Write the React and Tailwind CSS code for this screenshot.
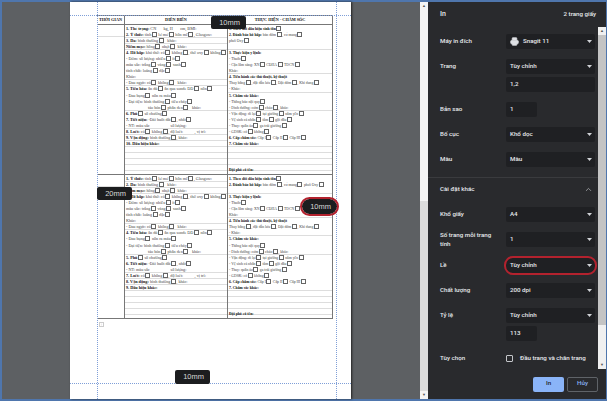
import { ChevronUp, Printer } from 'lucide-react'

const LEFT_ROWS = [
  ['**2. Ý thức:** tỉnh [] lơ mơ [] hôn mê [] , Glasgow:', 1],
  ['**3. Da:** bình thường []   khác:', 1],
  ['**Niêm mạc:** hồng [] nhợt []  khác:', 1],
  ['**4. Hô hấp:** khó thở: có [] không [] , thở oxy [] không []', 0],
  ['- Đờm: số lượng: nhiều [] ít []', 0],
  ['màu sắc: trắng [] vàng [] xanh []', 0],
  ['tính chất: loãng [] đặc []', 0],
  ['Khác:', 1],
  ['- Đau ngực: có [] không []   khác:', 1],
  ['**5. Tiêu hóa:** ăn đủ [] ăn qua sonde DD [] nôn []', 0],
  ['- Đau bụng [] nôn ra máu []', 0],
  ['- Đại tiện: bình thường [] tiêu chảy []', 0],
  ['__táo bón [] phân đen []   khác:', 1],
  ['**6. Phù** [] số chướng []', 0],
  ['**7. Tiết niệu:** -Đái buốt dắt [] , nhắt []', 0],
  ['- NT: màu sắc                    số lượng:', 1],
  ['**8. Loét:** có [] không [] , độ loét:            , vị trí:', 1],
  ['**9. Vận động:** bình thường [] , khác:', 1],
  ['**10. Dấu hiệu khác:**', 1],
]

const CARE_ROWS = [
  ['**3. Thực hiện y lệnh:**', 0],
  ['- Thuốc []', 0],
  ['- Cận lâm sàng: XN [] CĐHA [] TDCN []', 0],
  ['Khác:', 1],
  ['**4. Tiến hành các thủ thuật, kỹ thuật**', 0],
  ['Thay băng [] , đặt dẫn lưu [] , Đặt đờm [] , Khí dung []', 0],
  ['- Khác:', 1],
  ['**5. Chăm sóc khác:**', 0],
  ['- Thông báo nội quy []', 0],
  ['- Dinh dưỡng: cơm [] cháo [] , khác:', 1],
  ['- Vận động: đi lại [] tại giường [] nằm yên []', 0],
  ['- Vệ sinh cá nhân [] tắm [] gội đầu []', 0],
  ['- Thay: quần áo [] ga trải giường []', 0],
  ['- GDSK: có [] không []', 0],
  ['**6. Cấp chăm sóc:** Cấp I [] Cấp II [] Cấp III []', 0],
  ['**7. Chăm sóc khác:**', 1],
  ['', 1],
  ['', 1],
  ['', 1],
  ['', 1],
]

const TOP_RIGHT = [
  ['**1. Theo dõi dấu hiệu sinh tồn** []', 0],
  ['**2. Đánh bảo hô hấp:** bàn đờm [] , cổ mang []', 0],
  ['phơi Oxy []', 0],
  ['', 1],
  ...CARE_ROWS,
]

const BOTTOM_RIGHT = [
  ['**1. Theo dõi dấu hiệu sinh tồn** []', 0],
  ['**2. Đánh bảo hô hấp:** bàn đờm [] , cổ mang [] phơi Oxy []', 0],
  ['', 1],
  ...CARE_ROWS,
]

const BLANK_LINES = [['', 1], ['', 1], ['', 1], ['', 1]]

const TOP_LEFT = [['**1. Thể trạng:** CN       kg, H       cm, BMI:', 0], ...LEFT_ROWS, ...BLANK_LINES]

// the second block has no "Thể trạng" row, so its numbers are one lower
const BOTTOM_LEFT = [
  ...LEFT_ROWS.map(([text, line]) => [
    text.replace(/^\*\*(\d+)\./, (m, n) => `**${Number(n) - 1}.`),
    line,
  ]),
  ...BLANK_LINES,
]

function Box() {
  return <span className="inline-block w-[5px] h-[5px] mx-[0.5px] border border-[#666] bg-white align-[-1px]" />
}

// "**x**" is bold, "[]" is a checkbox
function FormText({ text }) {
  const tight = text.replace(/ \[\]/g, '[]').replace(/ , /g, ', ')
  return tight.split(/(\*\*.*?\*\*|\[\])/).map((part, i) => {
    if (part === '[]') return <Box key={i} />
    if (part.startsWith('**')) return <b key={i} className="text-[#111]">{part.slice(2, -2)}</b>
    return <span key={i}>{part}</span>
  })
}

function FormRow({ text, line }) {
  const indent = text.startsWith('__')
  return (
    <div className={`h-[6.05px] leading-[6px] whitespace-pre ${line ? 'border-b border-[#ddd]' : ''} ${indent ? 'pl-[23px]' : 'pl-[1px]'}`}>
      <FormText text={indent ? text.slice(2) : text} />
    </div>
  )
}

function FormColumn({ rows }) {
  return rows.map(([text, line], i) => <FormRow key={i} text={text} line={line} />)
}

function FormBlock({ left, right, height }) {
  return (
    <div className={`grid grid-cols-[28px_103px_104px] ${height}`}>
      <div className="border-r border-[#777] pt-[6px]">
        <div className="h-[6px] border-b border-[#ddd]" />
      </div>
      <div className="border-r border-[#777] pt-[1px] min-w-0">
        <FormColumn rows={left} />
      </div>
      <div className="relative pt-[1px] min-w-0 text-[3.8px]">
        <FormColumn rows={right} />
        <div className="absolute bottom-[1px] left-[1px] font-bold leading-[6px] text-[#111]">Đội phó cô tên:</div>
      </div>
    </div>
  )
}

function Arrow() {
  return (
    <svg width="5" height="3" viewBox="0 0 5 3" className="shrink-0">
      <path d="M0 0H5L2.5 3Z" fill="#d0d2d6" />
    </svg>
  )
}

function Select({ children, icon, ring }) {
  return (
    <div className={`h-[15px] w-[89px] bg-[#1f2023] flex items-center pl-[4px] pr-[3px] text-[#e8eaed] ${ring ? 'outline-2 outline-[#b3222e] rounded-[7px]' : 'rounded-[2px]'}`}>
      {icon}
      <span className="flex-1">{children}</span>
      <Arrow />
    </div>
  )
}

function Input({ children, wide }) {
  return (
    <div className={`h-[15px] ${wide ? 'w-[89px]' : 'w-[31px]'} rounded-[2px] bg-[#1f2023] flex items-center pl-[4px] text-[#e8eaed]`}>
      {children}
    </div>
  )
}

function Setting({ label, children, className = 'mb-[10px]' }) {
  return (
    <div className={`flex ${className}`}>
      <div className="w-[66px] h-[15px] shrink-0 flex items-center leading-[9px] text-[#e8eaed]">
        <span>{label}</span>
      </div>
      <div className="flex flex-col gap-[3px]">{children}</div>
    </div>
  )
}

function Tag({ children, className }) {
  return (
    <div className={`absolute flex items-center justify-end pr-[6px] w-[35px] bg-[#1c1d1f] text-[#d8d8d8] text-[7.5px] ${className}`}>
      {children}
    </div>
  )
}

function ScrollEnd({ children }) {
  return <span className="h-[8px] text-[4px] leading-[8px] text-center text-[#555] shrink-0">{children}</span>
}

export default function App() {
  return (
    <div className="w-[607px] h-[401px] overflow-hidden bg-[#4f76ad] py-[2px] pl-[2px] pr-[1px] flex font-['Liberation_Sans',sans-serif]">
      {/* preview */}
      <div className="w-[418px] shrink-0 bg-[#5d6063] pl-[68px] flex">
        <div className="relative w-[281px] h-[397px] bg-white shadow-[1px_0_2px_#222] pt-[13px] pl-[27px] font-['Liberation_Serif',serif] text-[4.2px] text-[#444]">
          <div className="w-[236px] border border-[#777] border-l-0">
            <div className="grid grid-cols-[28px_103px_104px] h-[9px] border-b border-[#777] font-bold text-center text-[#111] leading-[8px]">
              <div className="border-r border-[#777]">THỜI GIAN</div>
              <div className="border-r border-[#777]">DIỄN BIẾN</div>
              <div>THỰC HIỆN - CHĂM SÓC</div>
            </div>
            <div className="border-b border-[#777]">
              <FormBlock left={TOP_LEFT} right={TOP_RIGHT} height="h-[149px]" />
            </div>
            <FormBlock left={BOTTOM_LEFT} right={BOTTOM_RIGHT} height="h-[143px]" />
          </div>
          <div className="mt-[3px] ml-[2px] w-[5px] h-[5px] border border-[#ccc] text-center leading-[3px] text-[#888]">+</div>

          {/* margin guides */}
          <div className="absolute top-[13px] left-0 right-0 border-t border-dotted border-[#7f9fd8]" />
          <div className="absolute top-[381px] left-0 right-0 border-t border-dotted border-[#7f9fd8]" />
          <div className="absolute top-0 bottom-0 left-[27px] border-l border-dotted border-[#7f9fd8]" />
          <div className="absolute top-0 bottom-0 left-[266px] border-l border-dotted border-[#7f9fd8]" />

          <div className="font-['Liberation_Sans',sans-serif]">
            <Tag className="top-[14px] left-[141px] h-[13px] rounded-[2px]">10mm</Tag>
            <Tag className="top-[185px] left-[27px] h-[13px] rounded-[2px]">20mm</Tag>
            <Tag className="top-[368px] left-[105px] h-[14px] rounded-[2px]">10mm</Tag>
            <Tag className="top-[197px] left-[232px] h-[15px] outline-2 outline-[#b3222e] rounded-[8px]">10mm</Tag>
          </div>
        </div>
      </div>

      {/* preview scrollbar */}
      <div className="w-[8px] shrink-0 bg-[#f4f4f4] flex flex-col">
        <ScrollEnd>▲</ScrollEnd>
        <div className="flex-1" />
        <div className="h-[190px] bg-[#dcdcdc]" />
        <ScrollEnd>▼</ScrollEnd>
      </div>

      {/* print settings */}
      <div className="flex-1 flex flex-col bg-[#292a2d] text-[6.2px] font-medium font-['Roboto',sans-serif]">
        <div className="h-[25px] shrink-0 flex items-center justify-between pl-[12px] pr-[10px] text-[#e8eaed]">
          <span className="text-[7px]">In</span>
          <span>2 trang giấy</span>
        </div>

        <div className="flex-1 flex min-h-0">
          <div className="flex-1 flex flex-col pl-[12px] pt-[7px] min-w-0">
            <Setting label="Máy in đích">
              <Select icon={<Printer size={9} className="mr-[4px] text-[#dfe1e5]" fill="#dfe1e5" />}>Snagit 11</Select>
            </Setting>
            <Setting label="Trang">
              <Select>Tùy chỉnh</Select>
              <Input wide>1,2</Input>
            </Setting>
            <Setting label="Bản sao"><Input>1</Input></Setting>
            <Setting label="Bố cục"><Select>Khổ dọc</Select></Setting>
            <Setting label="Màu"><Select>Màu</Select></Setting>
            <div className="-ml-[12px] pl-[12px] pr-[5px] h-[24px] shrink-0 border-t border-[#3a3b3e] flex items-center justify-between text-[#e8eaed]">
              <span>Cài đặt khác</span>
              <ChevronUp size={9} className="text-[#aeb0b4]" />
            </div>
            <div className="h-[6px] shrink-0" />
            <Setting label="Khổ giấy"><Select>A4</Select></Setting>
            <Setting label={<>Số trang mỗi trang<br />tính</>} className="mb-[11px]"><Select>1</Select></Setting>
            <Setting label="Lề"><Select ring>Tùy chỉnh</Select></Setting>
            <Setting label="Chất lượng"><Select>200 dpi</Select></Setting>
            <Setting label="Tỷ lệ">
              <Select>Tùy chỉnh</Select>
              <Input>113</Input>
            </Setting>
            <div className="flex items-center h-[15px] whitespace-nowrap">
              <div className="w-[66px] shrink-0 text-[#e8eaed]">Tùy chọn</div>
              <div className="w-[7px] h-[7px] border border-[#c4c6ca] rounded-[1px] mr-[7px] shrink-0" />
              <span className="text-[#e8eaed]">Đầu trang và chân trang</span>
            </div>
          </div>
          <div className="w-[8px] shrink-0 bg-[#f0f0f0] flex flex-col">
            <ScrollEnd>▲</ScrollEnd>
            <div className="h-[290px] bg-[#c4c4c4]" />
            <div className="flex-1" />
            <ScrollEnd>▼</ScrollEnd>
          </div>
        </div>

        <div className="h-[30px] shrink-0 flex items-center justify-end gap-[3px] pr-[8px]">
          <div className="h-[15px] w-[31px] rounded-[2px] bg-[#8ab4f8] flex items-center justify-center text-[#202124]">In</div>
          <div className="h-[15px] w-[31px] rounded-[2px] border border-[#5f6368] flex items-center justify-center text-[#8ab4f8]">Hủy</div>
        </div>
      </div>
    </div>
  )
}
